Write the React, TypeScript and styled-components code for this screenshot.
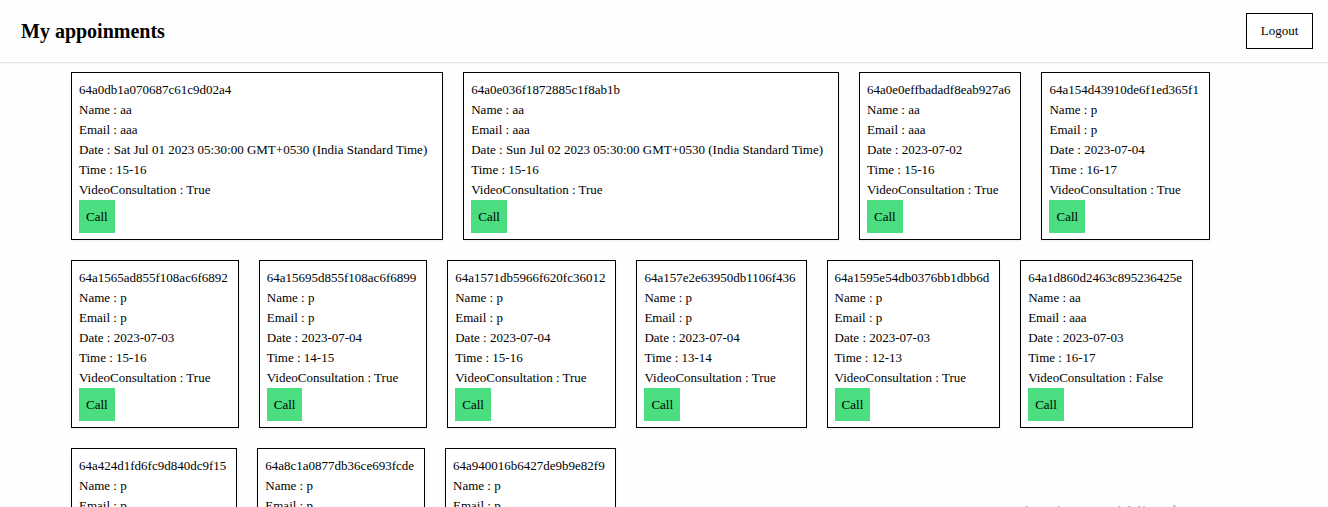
import React from "react";
import styled, { createGlobalStyle } from "styled-components";

const GlobalStyle = createGlobalStyle`
  *, *::before, *::after { box-sizing: border-box; }
  body {
    margin: 0;
    background: #fefefe;
    color: #000;
    font-family: "Liberation Serif", "Times New Roman", serif;
    font-size: 13px;
    line-height: 20px;
    overflow: hidden;
  }
`;

const Header = styled.header`
  display: flex;
  align-items: center;
  justify-content: space-between;
  padding: 13px 15px 13px 21px;
  border-bottom: 1px solid #e5e5e5;
  box-shadow: 0 1px 2px rgba(0, 0, 0, 0.05);
`;

const Title = styled.h1`
  margin: 0;
  font-size: 20px;
  line-height: 28px;
  font-weight: 700;
`;

const LogoutButton = styled.button`
  min-width: 67px;
  height: 36px;
  padding: 0 13px;
  border: 1px solid #000;
  background: #fff;
  color: inherit;
  font: inherit;
  cursor: pointer;
`;

const CardList = styled.main`
  display: flex;
  flex-wrap: wrap;
  gap: 20px;
  padding: 9px 71px;
`;

const Card = styled.article<{ $wide: boolean }>`
  padding: 7px ${({ $wide }) => ($wide ? 15 : 10)}px 6px 7px;
  border: 1px solid #000;
  background: #fff;
  box-shadow: 0 1px 2px rgba(0, 0, 0, 0.08);
`;

const Line = styled.p`
  margin: 0;
  white-space: nowrap;
`;

const CallButton = styled.button`
  display: block;
  height: 33px;
  padding: 0 7px;
  border: 0;
  background: #4ade80;
  color: inherit;
  font: inherit;
  cursor: pointer;
`;

const Watermark = styled.div`
  position: fixed;
  bottom: -24px;
  right: 104px;
  color: #b4b4b4;
  font-family: "Open Sans", sans-serif;
  font-size: 25px;
  line-height: 34px;
  white-space: nowrap;
  pointer-events: none;
`;

interface Appointment {
  id: string;
  user: string;
  email: string;
  date: string;
  time: string;
  video: boolean;
}

const book = (
  id: string, user: string, email: string, date: string, time: string, video = true
): Appointment => ({ id, user, email, date, time, video });

const appointments: Appointment[] = [
  book("64a0db1a070687c61c9d02a4", "aa", "aaa", "Sat Jul 01 2023 05:30:00 GMT+0530 (India Standard Time)", "15-16"),
  book("64a0e036f1872885c1f8ab1b", "aa", "aaa", "Sun Jul 02 2023 05:30:00 GMT+0530 (India Standard Time)", "15-16"),
  book("64a0e0effbadadf8eab927a6", "aa", "aaa", "2023-07-02", "15-16"),
  book("64a154d43910de6f1ed365f1", "p", "p", "2023-07-04", "16-17"),
  book("64a1565ad855f108ac6f6892", "p", "p", "2023-07-03", "15-16"),
  book("64a15695d855f108ac6f6899", "p", "p", "2023-07-04", "14-15"),
  book("64a1571db5966f620fc36012", "p", "p", "2023-07-04", "15-16"),
  book("64a157e2e63950db1106f436", "p", "p", "2023-07-04", "13-14"),
  book("64a1595e54db0376bb1dbb6d", "p", "p", "2023-07-03", "12-13"),
  book("64a1d860d2463c895236425e", "aa", "aaa", "2023-07-03", "16-17", false),
  book("64a424d1fd6fc9d840dc9f15", "p", "p", "2023-07-05", "15-16"),
  book("64a8c1a0877db36ce693fcde", "p", "p", "2023-07-08", "15-16"),
  book("64a940016b6427de9b9e82f9", "p", "p", "2023-07-08", "15-16"),
];

export default function App() {
  return (
    <>
      <GlobalStyle />
      <Header>
        <Title>My appoinments</Title>
        <LogoutButton type="button">Logout</LogoutButton>
      </Header>
      <CardList>
        {appointments.map((a) => (
          <Card key={a.id} $wide={a.date.length > 10}>
            <Line>{a.id}</Line>
            <Line>Name : {a.user}</Line>
            <Line>Email : {a.email}</Line>
            <Line>Date : {a.date}</Line>
            <Line>Time : {a.time}</Line>
            <Line>VideoConsultation : {a.video ? "True" : "False"}</Line>
            <CallButton type="button">Call</CallButton>
          </Card>
        ))}
      </CardList>
      <Watermark>Activate Windows</Watermark>
    </>
  );
}
